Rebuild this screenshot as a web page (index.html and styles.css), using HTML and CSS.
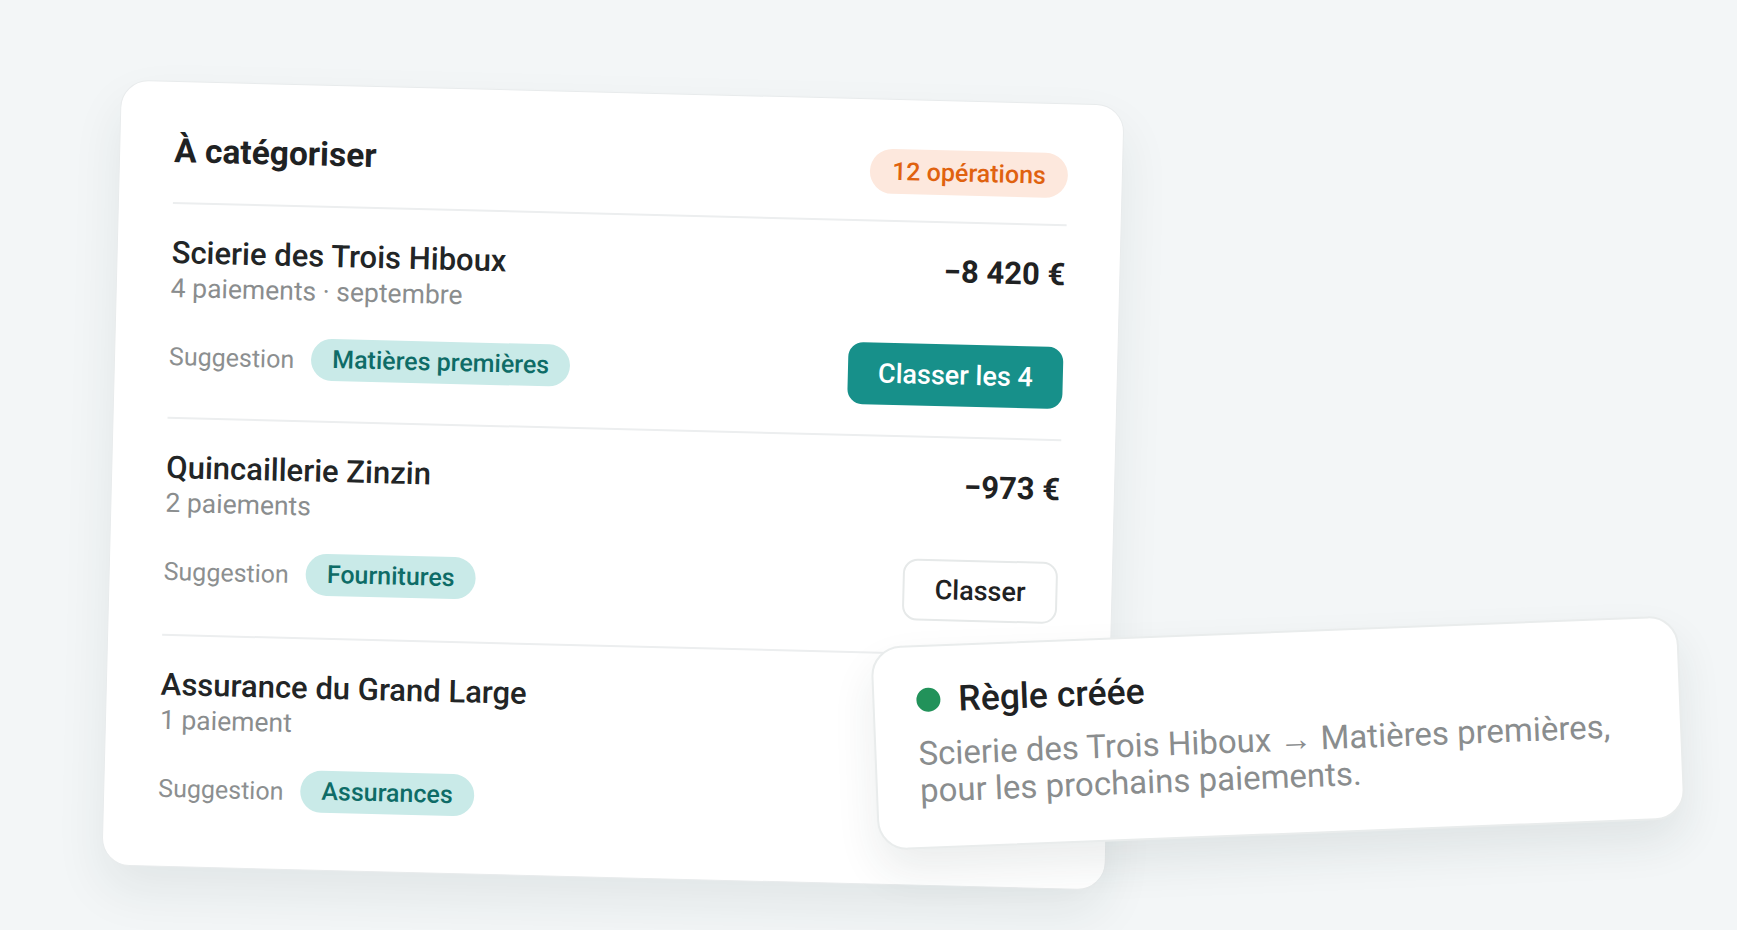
FILE: index.html
```html
<!DOCTYPE html>
<html lang="fr">
<head>
    <meta charset="UTF-8">
    <meta name="viewport" content="width=device-width, initial-scale=1.0">
    <title>À catégoriser</title>
<link rel="stylesheet" href="styles.css">
</head>
<body>
    <div class="stage">
        <div class="card">
            <div class="card-header">
                <div class="card-title">À catégoriser</div>
                <div class="count-badge">12 opérations</div>
            </div>

            <!-- Row 1 -->
            <div class="row">
                <div class="row-top">
                    <div>
                        <div class="payee">Scierie des Trois Hiboux</div>
                        <div class="meta">4 paiements · septembre</div>
                    </div>
                    <div class="amount">−8 420 €</div>
                </div>
                <div class="row-bottom">
                    <div class="suggestion">
                        <span class="suggestion-label">Suggestion</span>
                        <span class="chip">Matières premières</span>
                    </div>
                    <button class="btn btn-primary">Classer les 4</button>
                </div>
            </div>

            <!-- Row 2 -->
            <div class="row">
                <div class="row-top">
                    <div>
                        <div class="payee">Quincaillerie Zinzin</div>
                        <div class="meta">2 paiements</div>
                    </div>
                    <div class="amount">−973 €</div>
                </div>
                <div class="row-bottom">
                    <div class="suggestion">
                        <span class="suggestion-label">Suggestion</span>
                        <span class="chip">Fournitures</span>
                    </div>
                    <button class="btn btn-outline">Classer</button>
                </div>
            </div>

            <!-- Row 3 -->
            <div class="row">
                <div class="row-top">
                    <div>
                        <div class="payee">Assurance du Grand Large</div>
                        <div class="meta">1 paiement</div>
                    </div>
                </div>
                <div class="row-bottom">
                    <div class="suggestion">
                        <span class="suggestion-label">Suggestion</span>
                        <span class="chip">Assurances</span>
                    </div>
                </div>
            </div>
        </div>

        <div class="toast">
            <div class="toast-title">
                <span class="dot"></span>
                Règle créée
            </div>
            <div class="toast-body">Scierie des Trois Hiboux → Matières premières,<br>pour les prochains paiements.</div>
        </div>
    </div>
</body>
</html>
```

FILE: styles.css
```css
body {
    margin: 0;
    background: #f3f6f7;
    font-family: Roboto, "Liberation Sans", sans-serif;
    overflow: hidden;
}

.stage {
    position: relative;
    width: 1737px;
    height: 930px;
    padding: 92px 0 0 111px;
    box-sizing: border-box;
}

.card {
    width: 1004px;
    height: 786px;
    box-sizing: border-box;
    padding: 0 54px;
    background: white;
    border: 1px solid #e8ebec;
    border-radius: 28px;
    box-shadow: 0 24px 50px rgba(30, 50, 50, 0.08);
    transform: rotate(1.43deg);
}

.card-header {
    display: flex;
    justify-content: space-between;
    align-items: center;
    padding-top: 43px;
    height: 52px;
    margin-bottom: 25px;
}

.card-title {
    font-size: 33.5px;
    font-weight: 700;
    color: #1f2223;
    line-height: 52px;
}

.count-badge {
    height: 45px;
    line-height: 45px;
    padding: 0 22px;
    margin-top: 4px;
    border-radius: 23px;
    background: #fde8dd;
    color: #e0620f;
    font-size: 25px;
    font-weight: 500;
}

.row {
    border-top: 2px solid #eceeef;
    padding: 31px 0 30px;
}

.row:nth-child(3) {
    padding-bottom: 32px;
}

.row:last-child {
    padding-bottom: 0;
}

.row-top {
    display: flex;
    justify-content: space-between;
    align-items: flex-start;
}

.payee {
    font-size: 31px;
    font-weight: 500;
    color: #222526;
    line-height: 36px;
}

.meta {
    font-size: 26.5px;
    color: #8a8d8e;
    line-height: 34px;
}

.amount {
    font-size: 31px;
    font-weight: 700;
    color: #1f2223;
    line-height: 36px;
}

.row-bottom {
    display: flex;
    justify-content: space-between;
    align-items: center;
    margin-top: 20px;
    min-height: 62px;
}

.suggestion {
    display: flex;
    align-items: center;
    gap: 17px;
}

.suggestion-label {
    font-size: 25px;
    color: #8c8f90;
}

.chip {
    height: 42px;
    line-height: 42px;
    padding: 0 21px;
    border-radius: 21px;
    background: #c9eae8;
    color: #0e6c67;
    font-size: 25px;
    font-weight: 500;
}

.btn {
    height: 62px;
    padding: 0 30px;
    border-radius: 15px;
    font-family: Roboto, "Liberation Sans", sans-serif;
    font-size: 27px;
    font-weight: 500;
    cursor: pointer;
}

.btn-primary {
    background: #17908a;
    color: white;
    border: none;
}

.btn-outline {
    background: white;
    color: #1f2223;
    border: 2px solid #e6e9e9;
}

.toast {
    position: absolute;
    left: 874px;
    top: 631px;
    width: 808px;
    height: 204px;
    box-sizing: border-box;
    padding: 31px 40px 0 42px;
    background: white;
    border: 2px solid #e9ecec;
    border-radius: 30px;
    box-shadow: 0 22px 44px rgba(30, 50, 50, 0.09);
    transform: rotate(-2.25deg);
}

.toast-title {
    display: flex;
    align-items: center;
    gap: 18px;
    font-size: 35.5px;
    font-weight: 500;
    color: #1f2223;
    line-height: 44px;
}

.dot {
    width: 24px;
    height: 24px;
    border-radius: 50%;
    background: #22925a;
}

.toast-body {
    margin-top: 13px;
    font-size: 33px;
    color: #8a8d8e;
    line-height: 37px;
}
```
